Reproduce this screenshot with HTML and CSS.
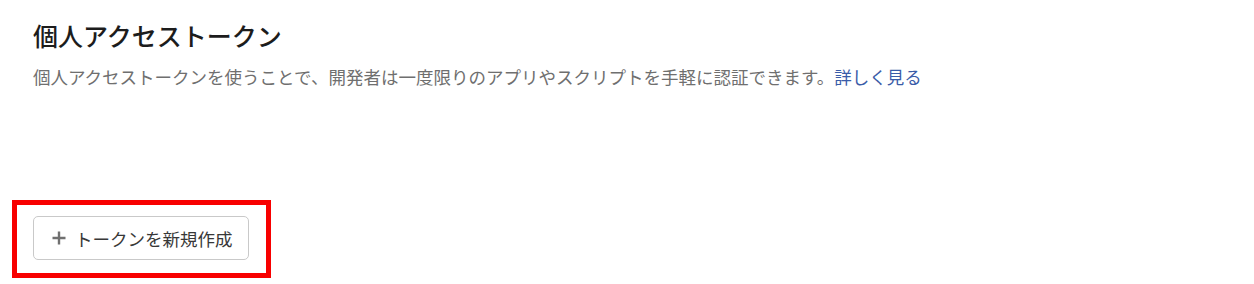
FILE: index.html
```html
<!DOCTYPE html>
<html lang="ja">
    <head>
        <meta charset="utf-8" />
        <meta name="viewport" content="width=device-width, initial-scale=1.0" />
        <title>個人アクセストークン</title>
        <link rel="stylesheet" href="styles.css">
    </head>
    <body>
        <main class="ajustes">
            <section class="tokens">
                <h2 class="tokens_titulo">個人アクセストークン</h2>
                <p class="tokens_texto">
                    個人アクセストークンを使うことで、開発者は一度限りのアプリやスクリプトを手軽に認証できます。<a href="#" class="tokens_enlace">詳しく見る</a>
                </p>
            </section>

            <div class="resaltado">
                <button class="boton_nuevo">
                    <svg class="boton_icono" viewBox="0 0 14 14" width="14" height="14" aria-hidden="true">
                        <path d="M7 0.5v13M0.5 7h13" stroke="currentColor" stroke-width="2.4" fill="none" />
                    </svg>
                    <span>トークンを新規作成</span>
                </button>
            </div>
        </main>
    </body>
</html>
```

FILE: styles.css
```css
* {
    padding: 0;
    margin: 0;
    box-sizing: border-box;
}

body {
    font-family: "Noto Sans CJK JP", "Noto Sans", sans-serif;
    background-color: #fff;
    color: #1f1f1f;
}

.ajustes {
    display: flex;
    flex-direction: column;
    align-items: flex-start;
    padding: 18px 12px 0;
}

.tokens {
    padding-left: 21px;
}

.tokens_titulo {
    font-size: 25px;
    font-weight: 500;
    line-height: 34px;
    color: #1c1c1c;
}

.tokens_texto {
    margin-top: 13px;
    font-size: 17.5px;
    line-height: 24px;
    color: #6f6f6f;
}

.tokens_enlace {
    color: #3a5ca8;
    text-decoration: none;
}

.resaltado {
    display: inline-flex;
    margin-top: 111px;
    padding: 11px 17px 13px 16px;
    border: 5px solid #f80000;
}

.boton_nuevo {
    display: flex;
    align-items: center;
    gap: 9px;
    height: 44px;
    padding: 0 15px 0 18px;
    font-family: inherit;
    font-size: 17.5px;
    font-weight: 400;
    color: #383838;
    background-color: #fff;
    border: 1px solid #c9c9c9;
    border-radius: 5px;
    cursor: pointer;
}

.boton_icono {
    color: #707070;
}
```
